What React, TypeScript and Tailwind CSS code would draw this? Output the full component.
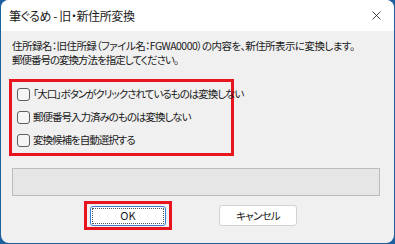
import { X } from 'lucide-react';

const font = "font-['Noto_Sans_CJK_JP','Noto_Sans',sans-serif] [font-feature-settings:'palt']";

function Check({ label }: { label: string }) {
  return (
    <label className="flex items-center gap-[3px] h-[23px]">
      <span className="w-[13px] h-[13px] rounded-[3px] border border-[#5f5f5f] bg-[#f5f5f5] shrink-0" />
      <span className="text-[10.5px] leading-none tracking-[-1px] text-[#1a1a1a] whitespace-nowrap">{label}</span>
    </label>
  );
}

export default function App() {
  return (
    <div className={`w-[395px] h-[244px] bg-[#1e5fa0] p-px pt-0 ${font}`}>
      <div className="w-full h-[243px] bg-[#f0f0f0] rounded-[8px] overflow-hidden flex flex-col">
        {/* Title bar */}
        <div className="h-[31px] bg-white flex items-center justify-between pl-[8px] pr-[10px] shrink-0">
          <span className="text-[12px] tracking-[-0.4px] text-[#1a1a1a]">筆ぐるめ - 旧・新住所変換</span>
          <X className="w-[15px] h-[15px] text-[#222]" strokeWidth={1.3} />
        </div>

        {/* Body */}
        <div className="flex flex-col px-[11px] pt-[8px]">
          <p className="text-[10.5px] leading-[14px] text-[#1a1a1a] whitespace-nowrap">
            <span className="tracking-[-0.55px]">住所録名：旧住所録（ファイル名：FGWA0000）の内容を、新住所表示に変換します。</span>
            <br />
            <span className="tracking-[-1px]">郵便番号の変換方法を指定してください。</span>
          </p>

          <div className="mt-[12px] ml-[-3px] w-[225px] h-[77px] border-[3px] border-[#e8141e] flex flex-col justify-center pl-[5px]">
            <Check label="「大口」ボタンがクリックされているものは変換しない" />
            <Check label="郵便番号入力済みのものは変換しない" />
            <Check label="変換候補を自動選択する" />
          </div>

          <div className="mt-[12px] w-[368px] h-[28px] bg-[#e6e6e6] border border-[#bcbcbc]" />

          <div className="mt-[5px] flex items-center">
            <div className="ml-[72px] w-[88px] h-[29px] border-[3px] border-[#e8141e] flex items-center justify-center">
              <button className="w-[76px] h-[20px] bg-white border border-[#3d7bd1] rounded-[3px] flex items-center justify-center outline-1 outline-dotted outline-[#555] -outline-offset-[3px] text-[11px] text-[#1a1a1a]">
                OK
              </button>
            </div>
            <button className="ml-[47px] w-[78px] h-[21px] bg-white border border-[#d2d2d2] rounded-[3px] flex items-center justify-center text-[10.5px] tracking-[-0.8px] text-[#1a1a1a]">
              キャンセル
            </button>
          </div>
        </div>
      </div>
    </div>
  );
}
